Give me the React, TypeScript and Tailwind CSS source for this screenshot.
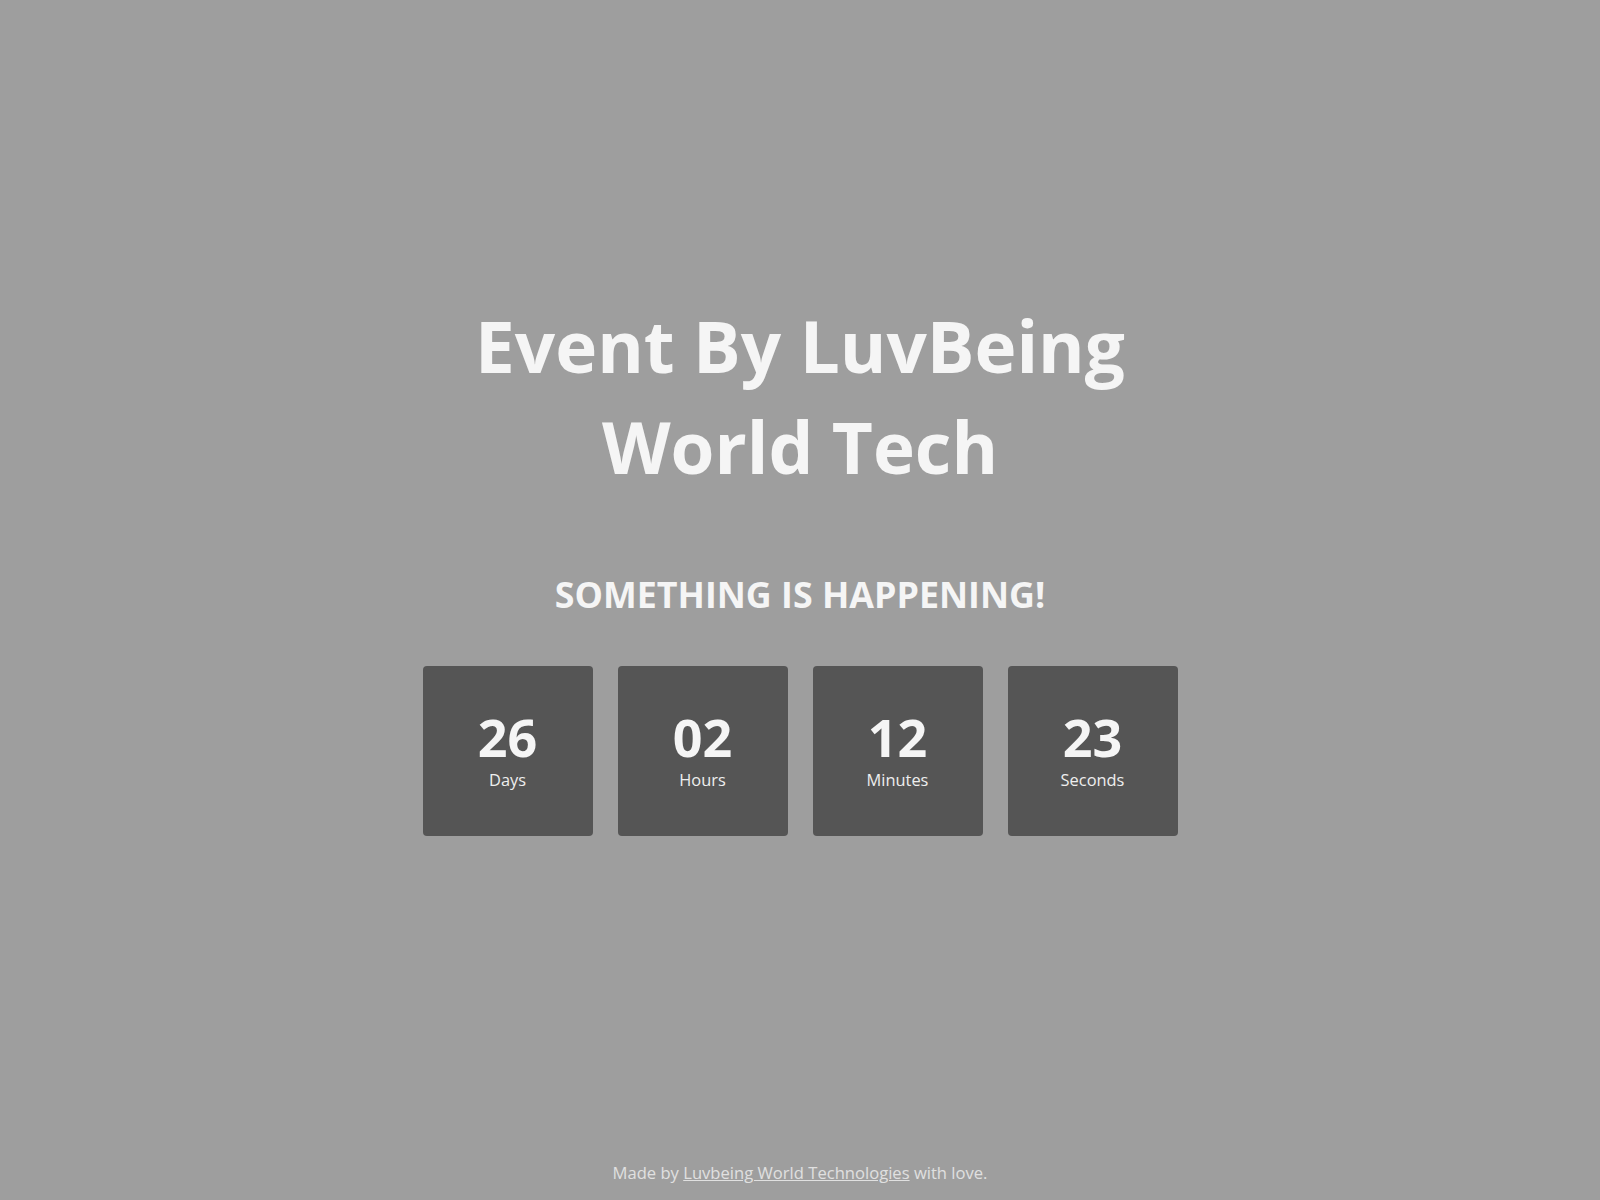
import React from "react";

const units = [
  { value: "26", label: "Days" },
  { value: "02", label: "Hours" },
  { value: "12", label: "Minutes" },
  { value: "23", label: "Seconds" },
];

export default function App() {
  return (
    <div
      className="min-h-screen flex flex-col bg-[#9e9e9e] text-[#f5f5f5]"
      style={{ fontFamily: '"Open Sans", "Noto Sans", sans-serif' }}
    >
      <main className="flex-1 flex flex-col items-center pt-[295px]">
        <h1 className="text-[71px] leading-[101px] font-bold text-center">
          Event By LuvBeing
          <br />
          World Tech
        </h1>
        <h2 className="mt-[73px] text-[35.8px] leading-[49px] font-bold uppercase text-center">
          Something is happening!
        </h2>
        <div className="mt-[47px] flex gap-[25px]">
          {units.map((u) => (
            <div
              key={u.label}
              className="w-[170px] h-[170px] rounded-[4px] bg-[#555555] flex flex-col items-center justify-center pb-[3px]"
            >
              <div className="text-[52px] leading-[57px] font-bold">{u.value}</div>
              <div className="mt-[3px] text-[16.4px] leading-[23px] text-[#eeeeee]">{u.label}</div>
            </div>
          ))}
        </div>
      </main>
      <footer className="pb-[16px] text-center text-[16.6px] leading-[22px] text-[#e0e0e0]">
        Made by{" "}
        <a href="#" className="underline">
          Luvbeing World Technologies
        </a>{" "}
        with love.
      </footer>
    </div>
  );
}
